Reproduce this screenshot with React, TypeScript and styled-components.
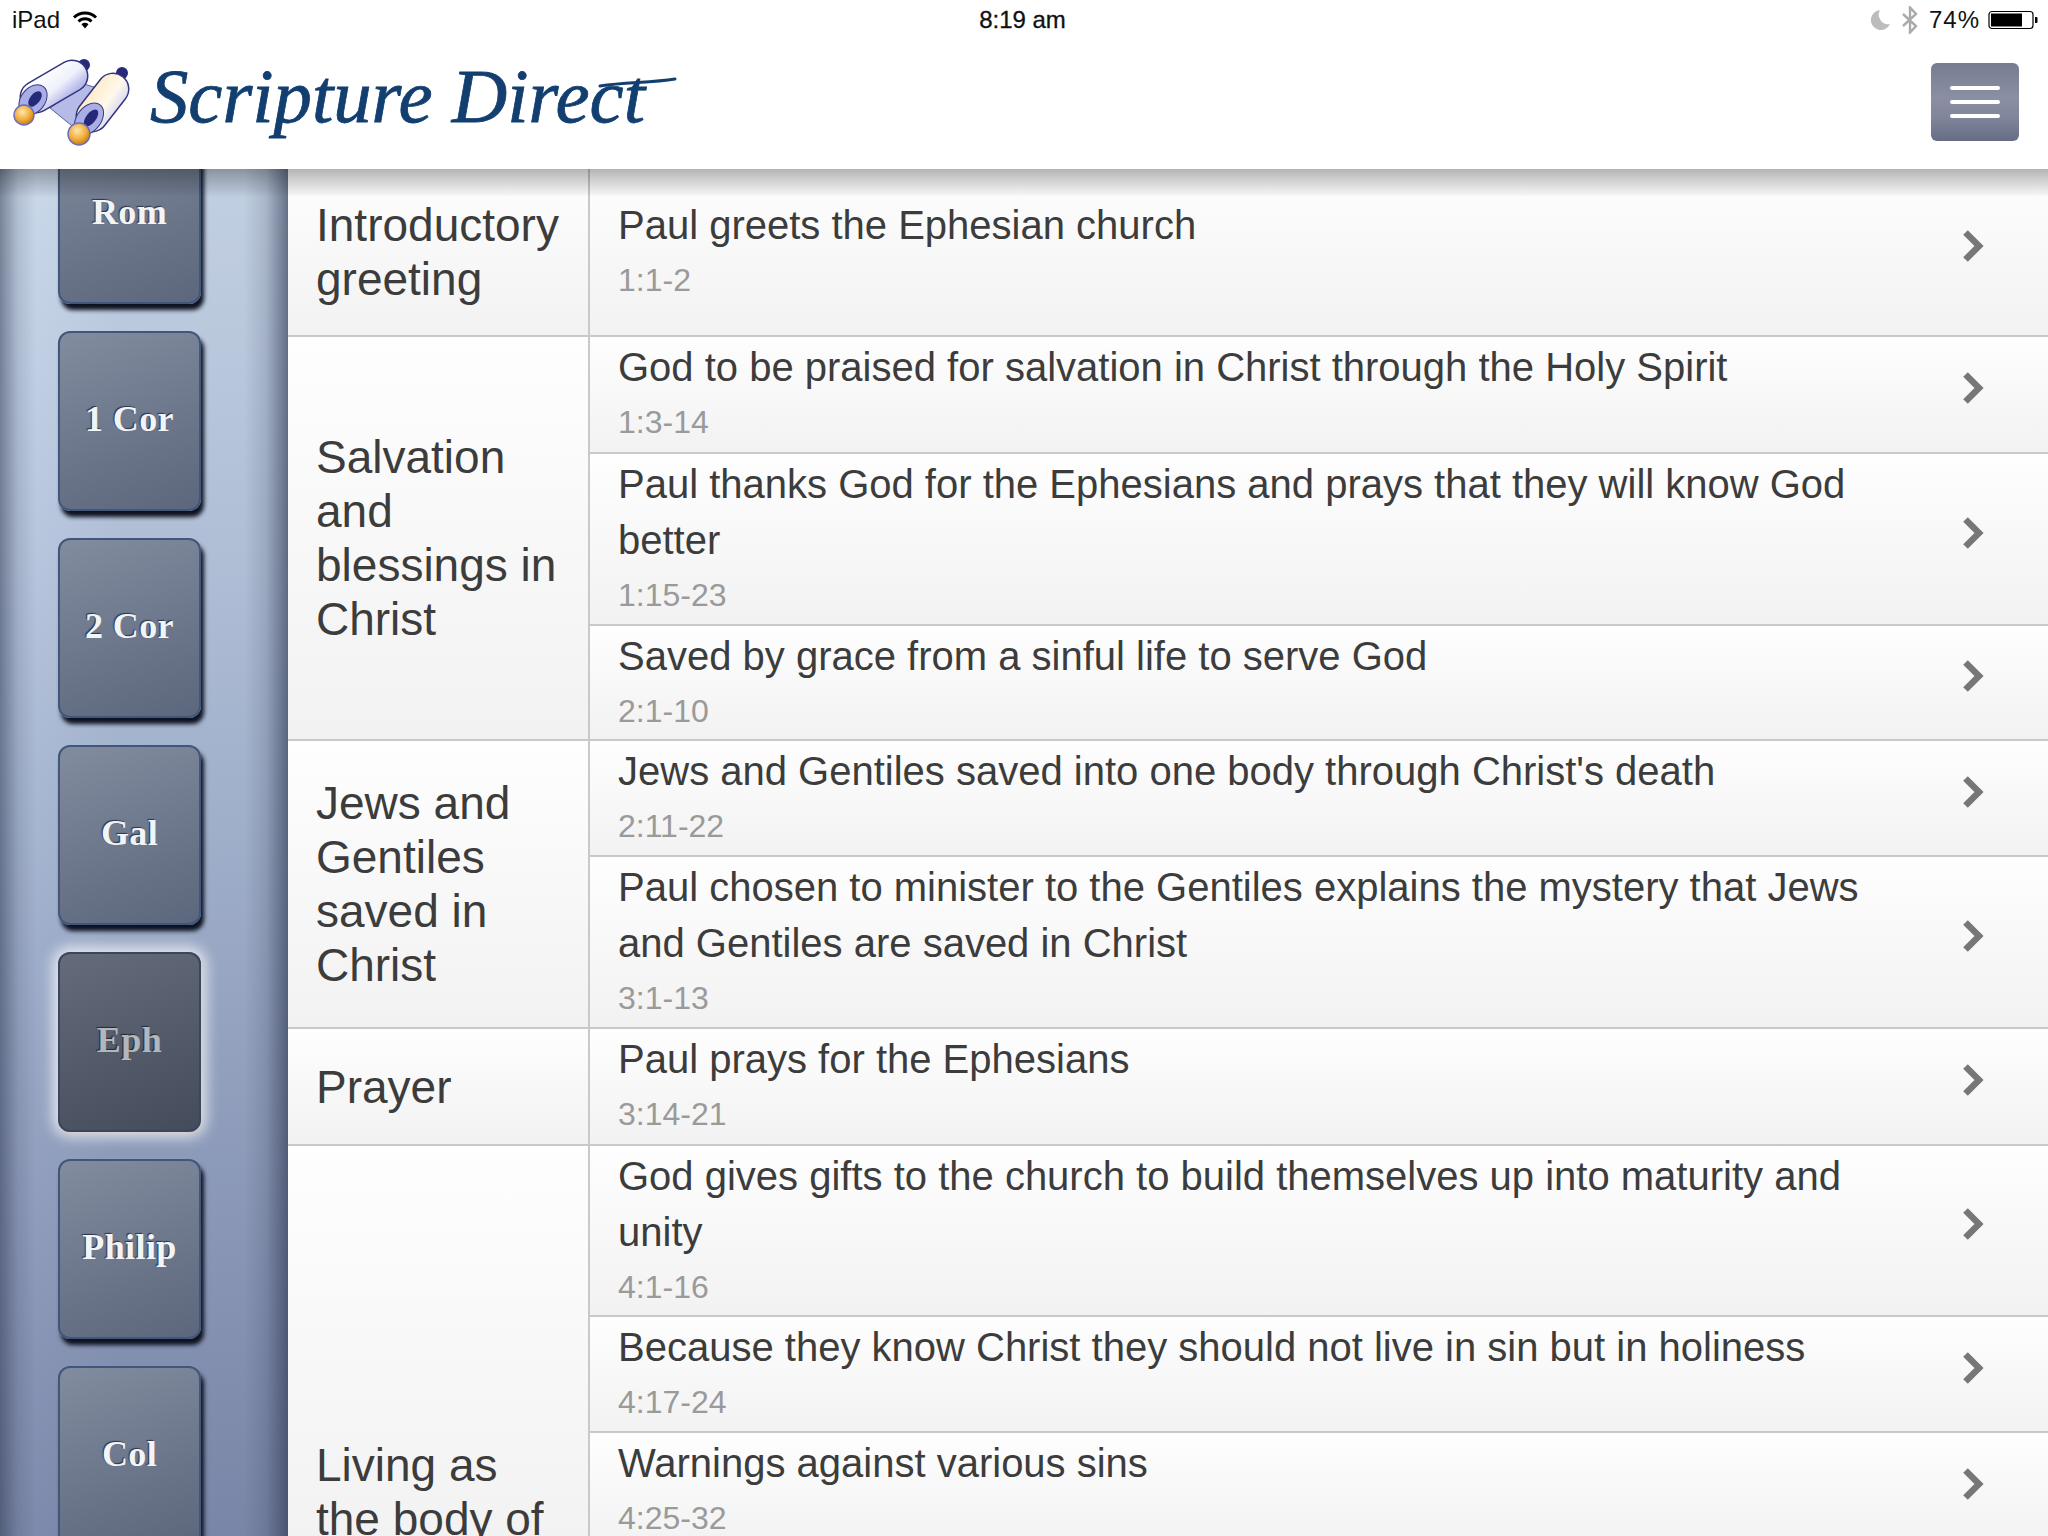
import React from "react";
import styled, { createGlobalStyle } from "styled-components";

const Global = createGlobalStyle`
  html, body { margin: 0; padding: 0; background: #fff; }
  #root { width: 2048px; height: 1536px; overflow: hidden; }
  * { box-sizing: border-box; }
`;

const Page = styled.div`
  position: relative;
  width: 2048px;
  height: 1536px;
  overflow: hidden;
  display: flex;
  flex-direction: column;
  font-family: "Liberation Sans", Arial, sans-serif;
  background: #fff;
`;

const StatusBar = styled.div`
  height: 40px;
  flex: none;
  display: grid;
  grid-template-columns: 1fr auto 1fr;
  align-items: center;
  padding: 0 10px 0 12px;
  font-size: 24px;
  color: #111;
`;
const StatusLeft = styled.div`
  display: flex;
  align-items: center;
  gap: 12px;
`;
const StatusTime = styled.div`
  margin-right: 5px;
  -webkit-text-stroke: 0.3px #111;
`;
const StatusRight = styled.div`
  display: flex;
  align-items: center;
  justify-content: flex-end;
  gap: 8px;
`;
const Battery74 = styled.span`
  letter-spacing: 1px;
`;
const Glyphs = styled.div`
  display: flex;
  align-items: center;
  gap: 10px;
  margin-right: 2px;
`;

const Header = styled.header`
  flex: none;
  height: 129px;
  display: flex;
  align-items: flex-start;
  justify-content: space-between;
  padding: 0 29px 0 10px;
`;
const LogoArt = styled.svg`
  margin-top: 16px;
  width: 680px;
  height: 100px;
  overflow: visible;
`;
const MenuButton = styled.button`
  width: 88px;
  height: 78px;
  margin-top: 23px;
  padding: 0;
  border: 0;
  border-radius: 6px;
  background: linear-gradient(#777c92 0%, #8a8fa3 45%, #80859b 70%, #666c85 100%);
  display: flex;
  flex-direction: column;
  justify-content: center;
  align-items: center;
  gap: 10px;
`;
const MenuLine = styled.span`
  width: 50px;
  height: 4px;
  border-radius: 2px;
  background: #fff;
`;

const Body = styled.div`
  flex: 1;
  min-height: 0;
  display: flex;
  position: relative;
  overflow: hidden;
`;
const TopShadow = styled.div`
  position: absolute;
  left: 0;
  right: 0;
  top: 0;
  height: 27px;
  background: linear-gradient(rgba(0, 0, 0, 0.29), rgba(0, 0, 0, 0.02));
  pointer-events: none;
`;

const Sidebar = styled.nav`
  flex: none;
  width: 288px;
  overflow: hidden;
  background:
    linear-gradient(90deg, rgba(40, 50, 75, 0.5) 0, rgba(40, 50, 75, 0.14) 18px, rgba(40, 50, 75, 0) 36px, rgba(40, 50, 75, 0.05) 120px, rgba(40, 50, 75, 0.05) 244px, rgba(40, 50, 75, 0.2) 266px, rgba(40, 50, 75, 0.62) 288px),
    linear-gradient(#cad8ea 0, #b6c5dc 400px, #9dacc9 800px, #8c99b9 1100px, #7d8aab 1367px);
`;
const TabList = styled.div`
  display: flex;
  flex-direction: column;
  align-items: flex-start;
  gap: 27px;
  margin-top: -45px;
  padding-left: 58px;
`;
const Tab = styled.a<{ $active?: boolean }>`
  flex: none;
  width: 143px;
  height: 180px;
  padding-bottom: 4px;
  border-radius: 12px;
  display: flex;
  align-items: center;
  justify-content: center;
  font-family: "Liberation Serif", "Times New Roman", serif;
  font-weight: 700;
  font-size: 36px;
  letter-spacing: 0.4px;
  border: 2px solid ${(p) => (p.$active ? "#3a465c" : "#41567a")};
  color: ${(p) => (p.$active ? "#b4b6ba" : "#f3f4f6")};
  text-shadow: -1px -1px 1px ${(p) => (p.$active ? "#23293a" : "#2b3347")};
  background: ${(p) =>
    p.$active
      ? "linear-gradient(160deg, #646c7c, #444c5c)"
      : "linear-gradient(160deg, #828c9f, #5c667c)"};
  box-shadow: ${(p) =>
    p.$active
      ? "0 0 14px 5px rgba(255,255,255,0.75), 2px 4px 3px rgba(150,152,160,0.95)"
      : "3px 6px 4px #0d1220"};
`;

const Table = styled.main`
  flex: 1;
  min-width: 0;
  display: flex;
  flex-direction: column;
  color: #3c3c3c;
`;
const Group = styled.section`
  flex: none;
  display: grid;
  grid-template-columns: 302px 1fr;
  border-bottom: 2px solid #c9c9c9;
`;
const GroupTitle = styled.div<{ $top?: number }>`
  display: flex;
  align-items: ${(p) => (p.$top ? "flex-start" : "center")};
  padding: ${(p) => p.$top ?? 0}px 20px 0 28px;
  font-size: 46px;
  line-height: 54px;
  color: #3c3c3c;
  background: linear-gradient(#fefefe, #f2f2f2);
  border-right: 2px solid #c9c9c9;
`;
const Rows = styled.div`
  display: flex;
  flex-direction: column;
`;
const Row = styled.div<{ $h: number }>`
  height: ${(p) => p.$h}px;
  flex: none;
  display: flex;
  align-items: flex-start;
  justify-content: space-between;
  padding: 2px 63px 0 28px;
  background: linear-gradient(#fefefe, #f2f2f2);
  & + & {
    border-top: 2px solid #c9c9c9;
  }
`;
const RowText = styled.div<{ $offset?: number }>`
  width: 1260px;
  margin-top: ${(p) => p.$offset ?? 0}px;
`;
const RowTitle = styled.div`
  font-size: 40px;
  line-height: 56px;
  color: #3c3c3c;
`;
const RowRef = styled.div`
  font-size: 32px;
  line-height: 54px;
  color: #9a9a9a;
`;
const Chevron = styled.svg`
  flex: none;
  align-self: center;
  width: 24px;
  height: 36px;
  margin-bottom: 15px;
`;

const Wifi = () => (
  <svg width="26" height="20" viewBox="0 0 26 20">
    <path d="M2 7.5a15.5 15.5 0 0 1 22 0" fill="none" stroke="#000" strokeWidth="3" />
    <path d="M6.5 11.5a9.2 9.2 0 0 1 13 0" fill="none" stroke="#000" strokeWidth="3" />
    <path d="M9.5 14.2a5 5 0 0 1 7 0L13 18.5z" fill="#000" />
  </svg>
);
const Moon = () => (
  <svg width="20" height="22" viewBox="0 0 20 22">
    <path d="M9 1a10 10 0 1 0 10 14A9.5 9.5 0 0 1 9 1z" fill="#bcbcbc" />
  </svg>
);
const Bluetooth = () => (
  <svg width="18" height="28" viewBox="0 0 18 28">
    <path d="M2 8l13 12-6 6.5V1.5l6 6.5L2 20" fill="none" stroke="#aaa" strokeWidth="2.4" />
  </svg>
);
const Battery = () => (
  <svg width="50" height="20" viewBox="0 0 50 20">
    <rect x="1" y="1.5" width="44" height="17" rx="3" fill="#fff" stroke="#000" strokeWidth="1.2" />
    <rect x="3" y="3.5" width="31" height="13" fill="#000" />
    <path d="M47 7h1.5a1 1 0 0 1 1 1v4a1 1 0 0 1-1 1H47z" fill="#000" />
  </svg>
);

const Logo = () => (
  <LogoArt viewBox="10 56 680 100">
    <defs>
      <linearGradient id="rollA" gradientUnits="userSpaceOnUse" x1="45" y1="72" x2="66" y2="97">
        <stop offset="0" stopColor="#ffffff" />
        <stop offset="0.6" stopColor="#eef0fb" />
        <stop offset="1" stopColor="#b9bcea" />
      </linearGradient>
      <linearGradient id="rollB" gradientUnits="userSpaceOnUse" x1="92" y1="88" x2="120" y2="108">
        <stop offset="0" stopColor="#fdeccb" />
        <stop offset="0.6" stopColor="#fff8ea" />
        <stop offset="1" stopColor="#d9dbf3" />
      </linearGradient>
      <radialGradient id="knob" cx="0.42" cy="0.35" r="0.7">
        <stop offset="0" stopColor="#ffe7ad" />
        <stop offset="0.6" stopColor="#eeaa35" />
        <stop offset="1" stopColor="#b9700c" />
      </radialGradient>
    </defs>
    <path d="M50 108L84 84 110 92 82 134z" fill="#b6bae6" stroke="#5d5f97" strokeWidth="1" />
    <circle cx="84" cy="65" r="6" fill="#27297a" />
    <line x1="36" y1="97" x2="72" y2="76" stroke="#33357c" strokeWidth="33" strokeLinecap="round" />
    <line x1="36" y1="97" x2="72" y2="76" stroke="url(#rollA)" strokeWidth="30" strokeLinecap="round" />
    <ellipse cx="33" cy="100" rx="12" ry="17" transform="rotate(38 33 100)" fill="#a9aee6" stroke="#3a3c80" />
    <ellipse cx="35" cy="99" rx="5" ry="9" transform="rotate(38 35 99)" fill="#262878" />
    <circle cx="122" cy="73" r="6" fill="#27297a" />
    <line x1="92" y1="116" x2="113" y2="89" stroke="#33357c" strokeWidth="33" strokeLinecap="round" />
    <line x1="92" y1="116" x2="113" y2="89" stroke="url(#rollB)" strokeWidth="30" strokeLinecap="round" />
    <ellipse cx="89" cy="119" rx="12" ry="18" transform="rotate(38 89 119)" fill="#a9aee6" stroke="#3a3c80" />
    <ellipse cx="91" cy="118" rx="5" ry="10" transform="rotate(38 91 118)" fill="#262878" />
    <circle cx="24" cy="115" r="10" fill="url(#knob)" stroke="#6a6cc0" strokeWidth="1.4" />
    <circle cx="79" cy="134" r="11" fill="url(#knob)" stroke="#6a6cc0" strokeWidth="1.4" />
    <text
      x="150"
      y="122"
      fontFamily="'Liberation Serif', serif"
      fontStyle="italic"
      fontSize="76"
      fill="#123f70"
      stroke="#123f70"
      strokeWidth="0.8"
      textLength="495"
      lengthAdjust="spacingAndGlyphs"
    >
      Scripture Direct
    </text>
    <path d="M600 86C625 82 650 83 675 79" fill="none" stroke="#123f70" strokeWidth="3" strokeLinecap="round" />
  </LogoArt>
);

const Arrow = () => (
  <Chevron viewBox="0 0 24 36">
    <path d="M4.5 4.5L18 18 4.5 31.5" fill="none" stroke="#777" strokeWidth="6.5" strokeLinejoin="miter" />
  </Chevron>
);

type Item = { title: string; ref: string; h: number; offset?: number };
type GroupData = { title: string; top?: number; items: Item[] };

const tabs = ["Rom", "1 Cor", "2 Cor", "Gal", "Eph", "Philip", "Col"];

const groups: GroupData[] = [
  { title: "Introductory greeting", items: [{ title: "Paul greets the Ephesian church", ref: "1:1-2", h: 166, offset: 26 }] },
  {
    title: "Salvation and blessings in Christ",
    items: [
      { title: "God to be praised for salvation in Christ through the Holy Spirit", ref: "1:3-14", h: 115 },
      { title: "Paul thanks God for the Ephesians and prays that they will know God better", ref: "1:15-23", h: 172 },
      { title: "Saved by grace from a sinful life to serve God", ref: "2:1-10", h: 115 },
    ],
  },
  {
    title: "Jews and Gentiles saved in Christ",
    items: [
      { title: "Jews and Gentiles saved into one body through Christ's death", ref: "2:11-22", h: 114 },
      { title: "Paul chosen to minister to the Gentiles explains the mystery that Jews and Gentiles are saved in Christ", ref: "3:1-13", h: 172 },
    ],
  },
  { title: "Prayer", items: [{ title: "Paul prays for the Ephesians", ref: "3:14-21", h: 115 }] },
  {
    title: "Living as the body of",
    top: 292,
    items: [
      { title: "God gives gifts to the church to build themselves up into maturity and unity", ref: "4:1-16", h: 169 },
      { title: "Because they know Christ they should not live in sin but in holiness", ref: "4:17-24", h: 116 },
      { title: "Warnings against various sins", ref: "4:25-32", h: 116 },
    ],
  },
];

export default function App() {
  return (
    <Page>
      <Global />
      <StatusBar>
        <StatusLeft>
          <span>iPad</span>
          <Wifi />
        </StatusLeft>
        <StatusTime>8:19 am</StatusTime>
        <StatusRight>
          <Glyphs>
            <Moon />
            <Bluetooth />
          </Glyphs>
          <Battery74>74%</Battery74>
          <Battery />
        </StatusRight>
      </StatusBar>
      <Header>
        <Logo />
        <MenuButton aria-label="Menu">
          <MenuLine />
          <MenuLine />
          <MenuLine />
        </MenuButton>
      </Header>
      <Body>
        <Sidebar>
          <TabList>
            {tabs.map((t) => (
              <Tab key={t} $active={t === "Eph"}>
                {t}
              </Tab>
            ))}
          </TabList>
        </Sidebar>
        <Table>
          {groups.map((g) => (
            <Group key={g.title}>
              <GroupTitle $top={g.top}>
                <span>{g.title}</span>
              </GroupTitle>
              <Rows>
                {g.items.map((it) => (
                  <Row key={it.ref} $h={it.h}>
                    <RowText $offset={it.offset}>
                      <RowTitle>{it.title}</RowTitle>
                      <RowRef>{it.ref}</RowRef>
                    </RowText>
                    <Arrow />
                  </Row>
                ))}
              </Rows>
            </Group>
          ))}
        </Table>
        <TopShadow />
      </Body>
    </Page>
  );
}
